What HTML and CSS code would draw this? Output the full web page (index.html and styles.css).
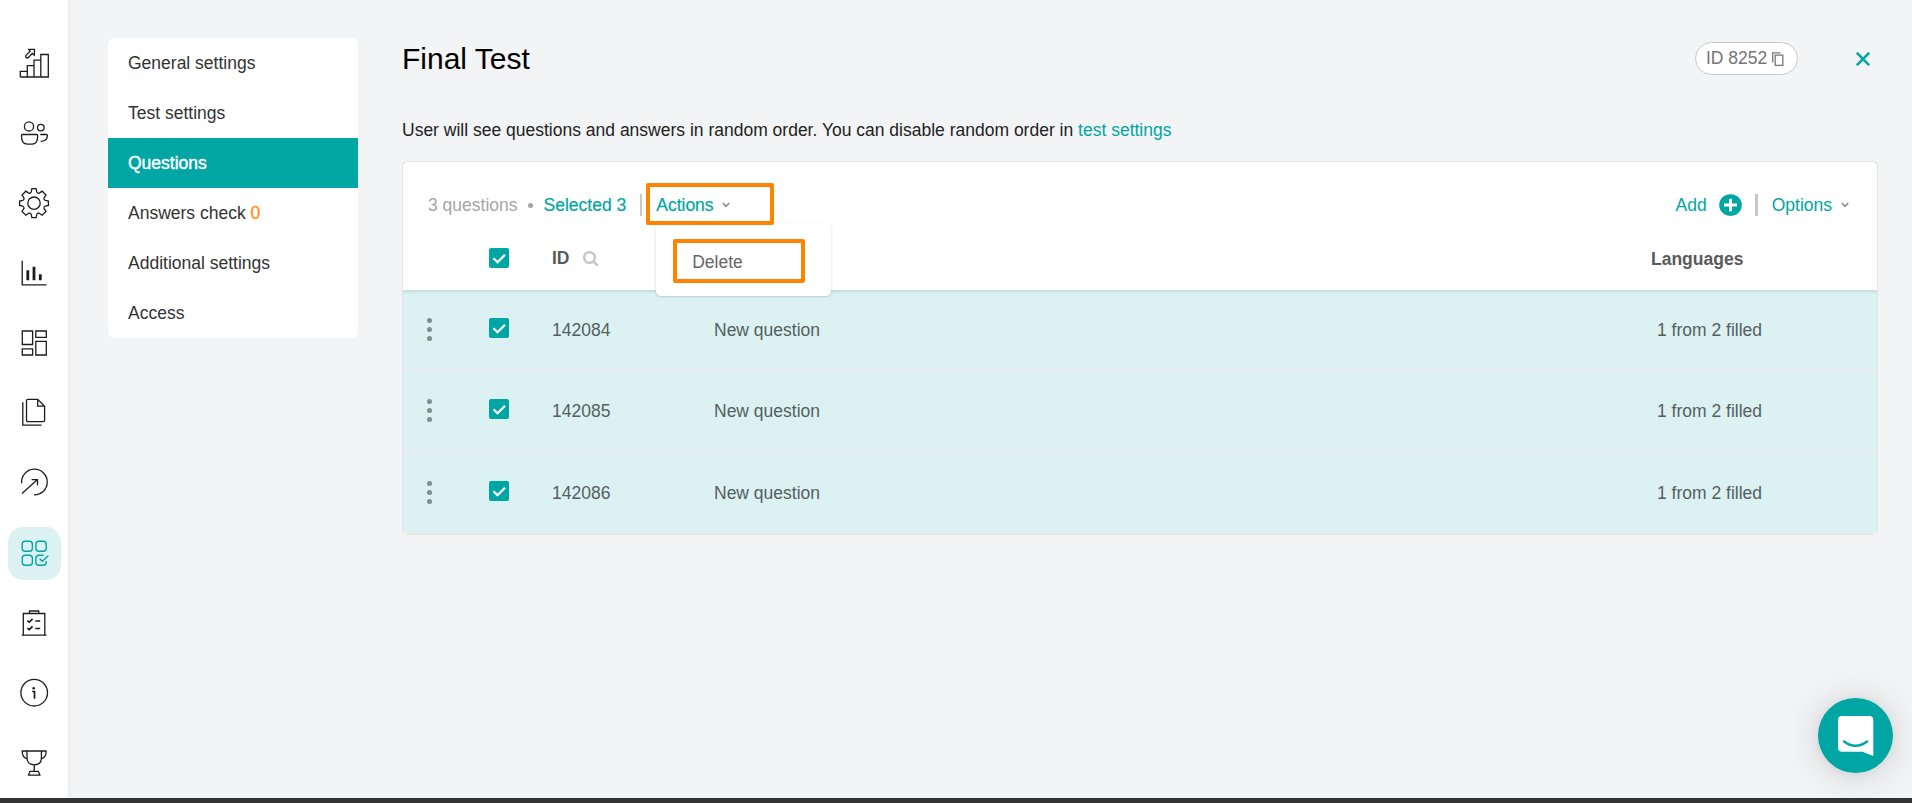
FILE: index.html
```
<!DOCTYPE html>
<html lang="en">
<head>
	<meta charset="utf-8">
	<meta name="viewport" content="width=device-width, initial-scale=1">
	<title>Final Test</title>
	<link rel="stylesheet" href="styles.css">
</head>
<body>
	<div class="app">
		<nav class="sidebar">
			<a class="nav-item"><svg viewBox="0 0 32 32"><path d="M2.3 30V24.3H9.3V30M9.3 24.3V18.7H16V30M16 18.7V13.2H22.8V30M22.8 13.2V7.5H30.3V30H2.3M16.5 2.3H10.7L12.2 4.3 7.8 8.6Q7.2 10.6 9.2 11L10.2 10.6 14.2 6.5 16.3 8.2Z"/></svg></a>
			<a class="nav-item"><svg viewBox="0 0 32 32"><circle cx="11" cy="9.4" r="4.6"/><circle cx="22.8" cy="10.6" r="3.3"/><path d="M4.5 17.5H18.5Q19.7 17.5 19.7 18.7C19.7 24.5 17.7 27.2 14 27.2H9.5C5.500 27.2 3.5 24.5 3.5 18.7Q3.5 17.5 4.5 17.5ZM22.3 17.5H28.3Q29.6 17.5 29.4 19C29 22.5 27 24.3 22.7 24.3"/></svg></a>
			<a class="nav-item"><svg viewBox="0 0 32 32"><circle cx="16" cy="16.2" r="6.2"/><path d="M13.9 1.7H18.1L18.8 5Q19.2 6 20.4 6.3Q21.3 6.4 22 5.6L24.2 4.2 28 8 26.4 10.4Q25.7 11.2 26 12Q26.3 13 27.3 13.3L30.4 14V18.4L27.3 19.1Q26.3 19.4 26 20.4Q25.7 21.2 26.4 22L28 24.4 24.2 28.2 22 26.8Q21.3 26 20.4 26.1Q19.2 26.4 18.8 27.4L18.1 30.7H13.9L13.2 27.4Q12.8 26.4 11.6 26.1Q10.7 26 10 26.8L7.8 28.2 4 24.4 5.6 22Q6.3 21.2 6 20.4Q5.7 19.4 4.7 19.1L1.6 18.4V14L4.7 13.3Q5.7 13 6 12Q6.3 11.2 5.6 10.4L4 8 7.8 4.2 10 5.6Q10.7 6.4 11.6 6.3Q12.8 6 13.2 5Z"/></svg></a>
			<a class="nav-item"><svg viewBox="0 0 32 32"><path d="M4.2 3.7V27.8H28.5"/><path class="thick" d="M9.8 13.3V23.3M16 9.7V23.3M22.3 17.3V23.3"/></svg></a>
			<a class="nav-item"><svg viewBox="0 0 32 32"><path d="M4.3 4H14.6V17.5H4.3ZM17.8 4H28.3V10.3H17.8ZM4.3 21.8H14.6V28H4.3ZM17.8 14.3H28.3V28H17.8Z"/></svg></a>
			<a class="nav-item"><svg viewBox="0 0 32 32"><path d="M10 2.3H19.7L26.6 9.2V23.2Q26.6 24.6 25.2 24.6H10Q8.5 24.6 8.5 23.2V3.7Q8.5 2.3 10 2.3ZM19.7 2.3V9.2H26.6M4.8 5.3V28.2H23.5"/></svg></a>
			<a class="nav-item"><svg viewBox="0 0 32 32"><path d="M3.7 16.2A12.8 12.8 0 1 1 16 27.8M4 26.5L19.5 12.6M13.6 12.6H19.5V18.2"/></svg></a>
			<a class="nav-item active"><svg viewBox="0 0 32 32"><rect x="4.2" y="4.2" width="10.2" height="10" rx="3"/><rect x="17.9" y="4.2" width="10.3" height="10" rx="3"/><rect x="4.2" y="18.2" width="10.2" height="10" rx="3"/><path d="M25.5 18.2H20.9Q17.9 18.2 17.9 21.2V25.2Q17.9 28.2 20.9 28.2H25.2Q28.2 28.2 28.2 25.2V24M21.7 21.7L24.3 24.3 30.3 18.7"/></svg></a>
			<a class="nav-item"><svg viewBox="0 0 32 32"><path d="M5.3 28V6.5H26.8V28M3.7 28.2H28.5M11.5 6.5V4H20.7V6.5M17.3 14H22.2M17.3 21.5H22.2"/><path class="medium" d="M9.3 13.7L11.2 15.2 14.6 11.8M9.3 21.2L11.2 22.7 14.6 19.3"/></svg></a>
			<a class="nav-item"><svg viewBox="0 0 32 32"><circle cx="16.2" cy="15.7" r="13.3"/><path class="medium" d="M14.2 14.5H16.5V21.8"/><circle class="dot" cx="15.7" cy="11.3" r="1.3"/></svg></a>
			<a class="nav-item"><svg viewBox="0 0 32 32"><path d="M3.8 4H28.5M9 4V11C9 15.5 12 17.8 16.2 17.8S23.4 15.5 23.4 11V4M4.2 4C4.2 8.5 5.3 10.7 9 11.8M28.2 4C28.2 8.5 27 10.7 23.4 11.8M16.2 17.8V24.2M12 24.3H20.4L21.9 28.2H10.5Z"/></svg></a>
		</nav>

		<aside class="side-menu">
			<a class="menu-link">General settings</a>
			<a class="menu-link">Test settings</a>
			<a class="menu-link current">Questions</a>
			<a class="menu-link">Answers check <span class="count">0</span></a>
			<a class="menu-link">Additional settings</a>
			<a class="menu-link">Access</a>
		</aside>

		<main class="content">
			<header class="page-header">
				<h1>Final Test</h1>
				<div class="id-badge">ID 8252
					<svg viewBox="0 0 12 15"><path d="M.7 10.5V.8H8.5M3.2 3.2H10.8V13.3H3.2Z"/></svg>
				</div>
				<svg class="close" viewBox="0 0 14 14"><path d="M.8 .8L13.2 13.2M13.2 .8L.8 13.2"/></svg>
			</header>

			<p class="hint">User will see questions and answers in random order. You can disable random order in <a>test settings</a></p>

			<section class="card">
				<div class="card-top">
					<div class="toolbar">
						<span class="total">3 questions</span>
						<span class="bullet"></span>
						<a class="selected">Selected 3</a>
						<span class="divider"></span>
						<div class="actions">
							<a>Actions</a>
							<svg class="chevron" viewBox="0 0 8 6"><path d="M.8 1L4 4.3 7.2 1"/></svg>
							<span class="mark mark-actions"></span>
							<div class="dropdown">
								<a>Delete</a>
								<span class="mark mark-delete"></span>
							</div>
						</div>
						<div class="toolbar-right">
							<a>Add</a>
							<svg class="plus" viewBox="0 0 23 22"><ellipse cx="11.5" cy="11" rx="11.3" ry="10.8"/><path d="M11.5 4.7V17.3M5 11H18"/></svg>
							<span class="divider wide"></span>
							<a>Options</a>
							<svg class="chevron" viewBox="0 0 8 6"><path d="M.8 1L4 4.3 7.2 1"/></svg>
						</div>
					</div>
					<div class="row head">
						<span></span>
						<span class="checkbox"><svg viewBox="0 0 20 20"><path d="M4.5 10.2L8.5 14.2 16 6.7"/></svg></span>
						<span class="id-head">ID <svg viewBox="0 0 16 16"><circle cx="6.5" cy="6.5" r="5.3"/><path d="M10.5 10.5L14.7 14.7"/></svg></span>
						<span></span>
						<span class="lang">Languages</span>
					</div>
				</div>

				<div class="row">
					<span class="dots"><i></i><i></i><i></i></span>
					<span class="checkbox"><svg viewBox="0 0 20 20"><path d="M4.5 10.2L8.5 14.2 16 6.7"/></svg></span>
					<span>142084</span>
					<span>New question</span>
					<span class="lang">1 from 2 filled</span>
				</div>
				<div class="row">
					<span class="dots"><i></i><i></i><i></i></span>
					<span class="checkbox"><svg viewBox="0 0 20 20"><path d="M4.5 10.2L8.5 14.2 16 6.7"/></svg></span>
					<span>142085</span>
					<span>New question</span>
					<span class="lang">1 from 2 filled</span>
				</div>
				<div class="row">
					<span class="dots"><i></i><i></i><i></i></span>
					<span class="checkbox"><svg viewBox="0 0 20 20"><path d="M4.5 10.2L8.5 14.2 16 6.7"/></svg></span>
					<span>142086</span>
					<span>New question</span>
					<span class="lang">1 from 2 filled</span>
				</div>
			</section>
		</main>
	</div>

	<div class="chat">
		<svg viewBox="0 0 36 41"><path class="bubble" d="M4 0H31.5Q35.3 0 35.3 4V40L24.5 35.7H4Q0 35.7 0 31.7V4Q0 0 4 0Z"/><path class="smile" d="M6 25.5Q17.6 34 29 25.5"/></svg>
	</div>
	<div class="bottom-bar"></div>
</body>
</html>
```
FILE: styles.css
```
*{
	box-sizing: border-box;
}

body{
	margin: 0px;
	height: 803px;
	overflow: hidden;
	background: #f3f4f6;
	font-family: "Liberation Sans", Arial, sans-serif;
	font-size: 17.5px;
	line-height: 20px;
	color: #333;
}

svg{
	display: block;
	fill: none;
	flex-shrink: 0;
}

.app{
	display: flex;
	height: 798px;
}

/* left icon bar */

.sidebar{
	width: 68px;
	flex-shrink: 0;
	background: #fff;
	box-shadow: 1px 0px 4px rgba(0,0,0,0.06);
	padding: 37px 0px 0px 8px;
	display: flex;
	flex-direction: column;
	gap: 17.5px;
}

.nav-item{
	width: 53px;
	height: 52.5px;
	flex-shrink: 0;
	border-radius: 15px;
	display: flex;
	align-items: center;
	justify-content: center;
	padding-right: 1px;
}

.nav-item svg{
	width: 32px;
	height: 32px;
	stroke: #1c1c1c;
	stroke-width: 1.3;
}

.nav-item .thick{
	stroke-width: 2.8;
}

.nav-item .medium{
	stroke-width: 1.7;
}

.nav-item .dot{
	fill: #1c1c1c;
	stroke: none;
}

.nav-item.active{
	background: #dcf1f2;
}

.nav-item.active svg{
	stroke: #00a6a4;
	stroke-width: 1.4;
}

/* settings menu */

.side-menu{
	width: 250px;
	height: 300px;
	flex-shrink: 0;
	margin: 38px 44px 0px 40px;
	background: #fff;
	border-radius: 7px;
}

.menu-link{
	display: block;
	height: 50px;
	line-height: 50px;
	padding-left: 20px;
}

.menu-link.current{
	background: #00a6a4;
	color: #fff;
	-webkit-text-stroke: 0.4px #fff;
}

.count{
	color: #ff8f0f;
	-webkit-text-stroke: 0.3px #ff8f0f;
}

/* page */

.content{
	width: 1476px;
	padding-top: 38px;
}

.page-header{
	display: flex;
	align-items: center;
	height: 41px;
	padding-right: 8px;
}

h1{
	margin: 0px auto 0px 0px;
	font-size: 30px;
	font-weight: normal;
	color: #000;
}

.id-badge{
	width: 103px;
	height: 33px;
	display: flex;
	align-items: center;
	gap: 5px;
	padding: 0px 0px 2px 10px;
	border: 1px solid #c8c8c8;
	border-radius: 17px;
	background: #fff;
	color: #757575;
	white-space: nowrap;
}

.id-badge svg{
	width: 12px;
	height: 15px;
	margin-top: 4px;
	stroke: #757575;
	stroke-width: 1.3;
}

.close{
	width: 14px;
	height: 14px;
	margin-left: 58px;
	stroke: #00a6a4;
	stroke-width: 2.6;
}

.hint{
	margin: 41px 0px 21px;
	color: #222;
}

.hint a, .toolbar a{
	color: #00a6a4;
}

.card{
	border: 1px solid #e2e4e5;
	border-radius: 5px;
	background: #fff;
}

.card-top{
	position: relative;
	height: 128px;
	border-radius: 5px 5px 0px 0px;
	background: #fff;
	box-shadow: 0px 1px 4px rgba(0,60,60,0.18);
	clip-path: inset(0px 0px -8px 0px);
	padding-top: 32px;
}

.toolbar{
	display: flex;
	align-items: center;
	height: 22px;
	padding: 0px 28px 0px 25px;
}

.total{
	color: #a5a5a5;
}

.bullet{
	width: 5px;
	height: 5px;
	border-radius: 50%;
	background: #a5a5a5;
	margin: 0px 11px 0px 10px;
}

.selected, .actions > a{
	-webkit-text-stroke: 0.2px #00a6a4;
}

.divider{
	width: 2px;
	height: 22px;
	background: #c8c8c8;
	margin: 0px 14px;
}

.divider.wide{
	width: 3px;
	margin: 0px 14px 0px 13px;
}

.actions{
	position: relative;
	display: flex;
	align-items: center;
	gap: 8px;
}

.chevron{
	width: 8px;
	height: 6px;
	stroke: #8a8a8a;
	stroke-width: 1.5;
}

.dropdown{
	position: absolute;
	left: 0px;
	top: 28px;
	z-index: 1;
	width: 175px;
	height: 73px;
	padding: 29px 0px 0px 36px;
	border-radius: 5px;
	background: #fff;
	box-shadow: 0px 1px 3px rgba(0,0,0,0.16);
}

.toolbar .dropdown a{
	color: #666;
}

/* orange highlight frames */

.mark{
	position: absolute;
	border: 4px solid #ff8300;
	border-radius: 2px;
	z-index: 2;
}

.mark-actions{
	left: -10px;
	top: -12px;
	width: 128px;
	height: 42px;
}

.mark-delete{
	left: 17px;
	top: 16px;
	width: 132px;
	height: 44px;
}

.toolbar-right{
	display: flex;
	align-items: center;
	margin-left: auto;
}

.toolbar-right .chevron{
	margin-left: 9px;
}

.plus{
	width: 23px;
	height: 22px;
	margin-left: 12px;
	fill: #00a6a4;
	stroke: #fff;
	stroke-width: 3;
}

.plus ellipse{
	stroke: none;
}

/* table */

.row{
	display: grid;
	grid-template-columns: 86px 63px 162px 1fr 220px;
	align-items: center;
	height: 81.25px;
	background: #dcf1f2;
	border-bottom: 2px solid #ececec;
	color: #555f5f;
}

.row:last-child{
	border-radius: 0px 0px 5px 5px;
	border-bottom-width: 1px;
}

.row.head{
	grid-template-columns: 86px 63px 162px 1fr 226px;
	height: 22px;
	margin-top: 31px;
	background: none;
	border: none;
	font-weight: bold;
	color: #5a5a5a;
}

.id-head{
	display: flex;
	align-items: center;
	gap: 13px;
}

.id-head svg{
	width: 16px;
	height: 16px;
	margin-top: 1px;
	stroke: #c8c8c8;
	stroke-width: 2.6;
}

.head .lang{
	padding-top: 1px;
}

.checkbox{
	width: 20px;
	height: 20px;
	border-radius: 2px;
	background: #00a6a4;
}

.row:not(.head) .checkbox{
	margin-top: -3px;
}

.checkbox svg{
	width: 20px;
	height: 20px;
	stroke: #fff;
	stroke-width: 2.3;
}

.dots{
	display: flex;
	flex-direction: column;
	gap: 4px;
	padding-left: 24px;
}

.dots i{
	width: 5px;
	height: 5px;
	border-radius: 50%;
	background: #7b8f8f;
}

/* chat launcher */

.chat{
	position: absolute;
	left: 1818px;
	top: 698px;
	width: 75px;
	height: 75px;
	border-radius: 50%;
	background: #00a6a4;
	box-shadow: 0px 2px 38px rgba(0,0,0,0.16), 0px 1px 8px rgba(0,0,0,0.06);
	padding: 18px 0px 0px 20px;
}

.chat svg{
	width: 36px;
	height: 41px;
}

.bubble{
	fill: #fff;
}

.smile{
	stroke: #00a6a4;
	stroke-width: 2.4;
	stroke-linecap: round;
}

.bottom-bar{
	position: relative;
	height: 5px;
	background: #333;
}
```
